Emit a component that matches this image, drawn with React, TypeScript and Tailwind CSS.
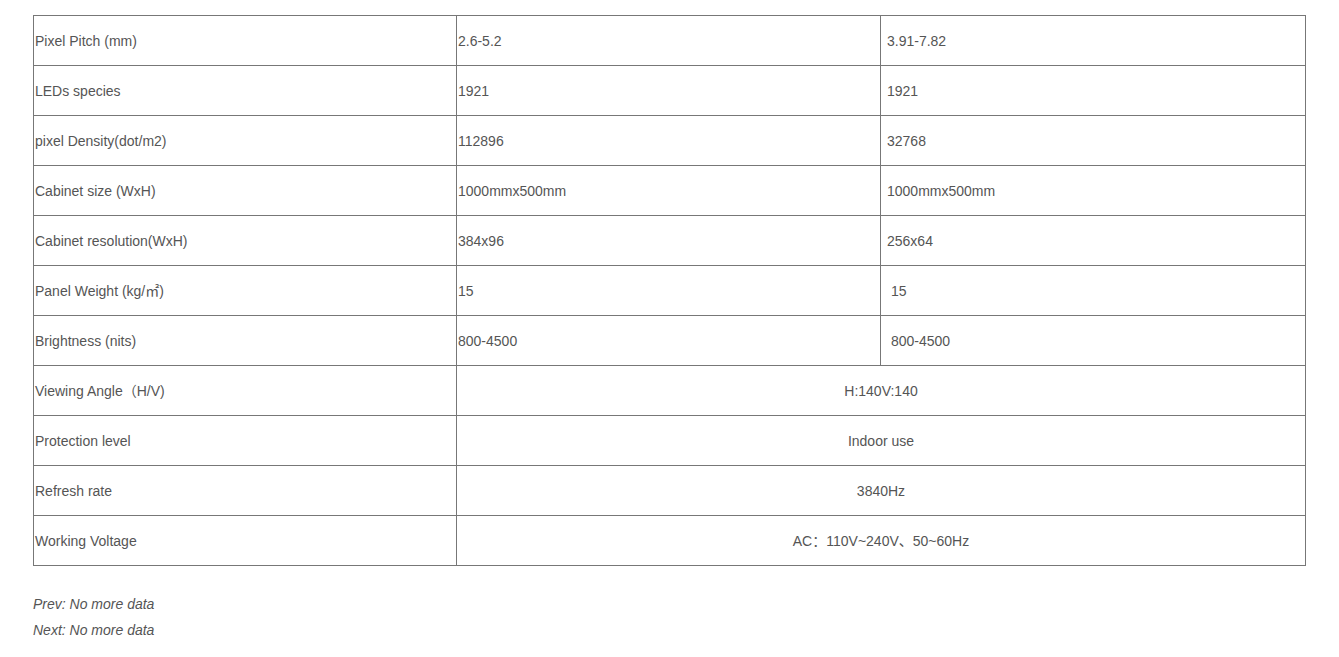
import React from "react";

type Row = { label: string; a?: string; b?: string; merged?: string };

const rows: Row[] = [
  { label: "Pixel Pitch (mm)", a: "2.6-5.2", b: "3.91-7.82" },
  { label: "LEDs species", a: "1921", b: "1921" },
  { label: "pixel Density(dot/m2)", a: "112896", b: "32768" },
  { label: "Cabinet size (WxH)", a: "1000mmx500mm", b: "1000mmx500mm" },
  { label: "Cabinet resolution(WxH)", a: "384x96", b: "256x64" },
  { label: "Panel Weight (kg/㎡)", a: "15", b: "\u00a015" },
  { label: "Brightness (nits)", a: "800-4500", b: "\u00a0800-4500" },
  { label: "Viewing Angle（H/V)", merged: "H:140V:140" },
  { label: "Protection level", merged: "Indoor use" },
  { label: "Refresh rate", merged: "3840Hz" },
  { label: "Working Voltage", merged: "AC：110V~240V、50~60Hz" },
];

export default function App() {
  return (
    <div
      className="min-h-[657px] bg-white px-[33px] pt-[15px] text-[14px] text-[#555]"
      style={{ fontFamily: '"Liberation Sans", Arial, "Noto Sans CJK SC", sans-serif' }}
    >
      <table className="w-full table-fixed border-collapse">
        <colgroup>
          <col className="w-[423px]" />
          <col className="w-[424px]" />
          <col />
        </colgroup>
        <tbody>
          {rows.map((r) => (
            <tr key={r.label} className="h-[50px]">
              <td className="border border-[#777] px-[1px] pt-[2px] align-middle">{r.label}</td>
              {r.merged ? (
                <td colSpan={2} className="border border-[#777] px-[1px] pt-[2px] text-center align-middle">
                  {r.merged}
                </td>
              ) : (
                <>
                  <td className="border border-[#777] px-[1px] pt-[2px] align-middle">{r.a}</td>
                  <td className="border border-[#777] pl-[6px] pr-[1px] pt-[2px] align-middle">{r.b}</td>
                </>
              )}
            </tr>
          ))}
        </tbody>
      </table>
      <div className="mt-[25px] italic leading-[26px]">
        <p>Prev: No more data</p>
        <p>Next: No more data</p>
      </div>
    </div>
  );
}
